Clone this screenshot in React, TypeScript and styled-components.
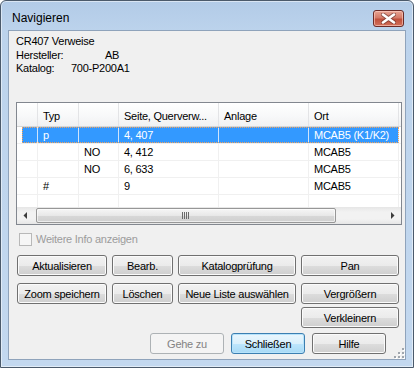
import React from "react";
import styled, { createGlobalStyle } from "styled-components";

const GlobalStyle = createGlobalStyle`
  html, body {
    margin: 0;
    padding: 0;
    background: #ffffff;
  }
  body {
    font-family: "Liberation Sans", Arial, sans-serif;
    font-size: 11px;
    color: #000000;
  }
`;

const COLS = [16, 41, 40, 100, 90, 90];

interface Entry {
  typ: string;
  flag: string;
  seite: string;
  anlage: string;
  ort: string;
  selected?: boolean;
}

const entries: Entry[] = [
  { typ: "p", flag: "", seite: "4, 407", anlage: "", ort: "MCAB5 (K1/K2)", selected: true },
  { typ: "", flag: "NO", seite: "4, 412", anlage: "", ort: "MCAB5" },
  { typ: "", flag: "NO", seite: "6, 633", anlage: "", ort: "MCAB5" },
  { typ: "#", flag: "", seite: "9", anlage: "", ort: "MCAB5" },
];

const CloseGlyph = () => (
  <svg width="15" height="11" viewBox="0 0 15 11">
    <path
      d="M2 1.5 L13 9.5 M13 1.5 L2 9.5"
      stroke="#5a2a26"
      strokeWidth="4.4"
      strokeLinecap="round"
      opacity="0.55"
    />
    <path d="M2 1.5 L13 9.5 M13 1.5 L2 9.5" stroke="#ffffff" strokeWidth="2.6" strokeLinecap="round" />
  </svg>
);

const Arrow = ({ dir }: { dir: "left" | "right" }) => (
  <svg width="5" height="7" viewBox="0 0 5 7">
    {dir === "left" ? (
      <polygon points="4,0 4,7 0.5,3.5" fill="#3c3c3c" />
    ) : (
      <polygon points="1,0 1,7 4.5,3.5" fill="#3c3c3c" />
    )}
  </svg>
);

const Grip = () => (
  <svg width="8" height="7" viewBox="0 0 8 7">
    {[0, 2, 4, 6].map((x) => (
      <rect key={x} x={x} y="0" width="1" height="7" fill="#6b6b6b" />
    ))}
  </svg>
);

const SizeGrip = () => (
  <svg width="12" height="12" viewBox="0 0 12 12">
    {[
      [9, 1],
      [9, 5],
      [5, 5],
      [9, 9],
      [5, 9],
      [1, 9],
    ].map(([x, y]) => (
      <g key={`${x}-${y}`}>
        <rect x={x + 1} y={y + 1} width="2" height="2" fill="#ffffff" />
        <rect x={x} y={y} width="2" height="2" fill="#a0a6ad" />
      </g>
    ))}
  </svg>
);

const App: React.FC = () => {
  return (
    <>
      <GlobalStyle />
      <Window>
        <TitleBar>
          <Title>Navigieren</Title>
          <CloseButton>
            <CloseGlyph />
          </CloseButton>
        </TitleBar>
        <Client>
          <Heading>CR407 Verweise</Heading>
          <InfoRow $h={14}>
            <InfoLabel>Hersteller:</InfoLabel>
            <InfoValue $indent={34}>AB</InfoValue>
          </InfoRow>
          <InfoRow $h={13}>
            <InfoLabel>Katalog:</InfoLabel>
            <InfoValue $indent={0}>700-P200A1</InfoValue>
          </InfoRow>

          <ListView>
            <Header>
              <HeaderCell $w={21} />
              <HeaderCell $w={COLS[1]}>Typ</HeaderCell>
              <HeaderCell $w={COLS[2]} />
              <HeaderCell $w={COLS[3]}>Seite, Querverw...</HeaderCell>
              <HeaderCell $w={COLS[4]}>Anlage</HeaderCell>
              <HeaderCell $w={COLS[5]}>Ort</HeaderCell>
              <HeaderRest />
            </Header>
            {entries.map((e, i) => (
              <Row key={i}>
                <Gutter />
                <RowBody $selected={!!e.selected}>
                  <Cell $w={COLS[0]} $selected={!!e.selected} />
                  <Cell $w={COLS[1]} $selected={!!e.selected}>{e.typ}</Cell>
                  <Cell $w={COLS[2]} $selected={!!e.selected}>{e.flag}</Cell>
                  <Cell $w={COLS[3]} $selected={!!e.selected}>{e.seite}</Cell>
                  <Cell $w={COLS[4]} $selected={!!e.selected}>{e.anlage}</Cell>
                  <Cell $w={COLS[5]} $selected={!!e.selected}>{e.ort}</Cell>
                </RowBody>
              </Row>
            ))}
            <FillerRow>
              <Gutter />
              <RowBody $selected={false}>
                {COLS.map((w, i) => (
                  <Cell key={i} $w={w} $selected={false} />
                ))}
              </RowBody>
            </FillerRow>
            <ScrollBar>
              <ScrollArrow>
                <Arrow dir="left" />
              </ScrollArrow>
              <Track>
                <Thumb>
                  <Grip />
                </Thumb>
              </Track>
              <ScrollArrow>
                <Arrow dir="right" />
              </ScrollArrow>
            </ScrollBar>
          </ListView>

          <CheckRow>
            <CheckBox />
            <CheckLabel>Weitere Info anzeigen</CheckLabel>
          </CheckRow>

          <ButtonRow $mt={9}>
            <Button>Aktualisieren</Button>
            <Button>Bearb.</Button>
            <Button>Katalogprüfung</Button>
            <Button>Pan</Button>
          </ButtonRow>
          <ButtonRow $mt={7}>
            <Button>Zoom speichern</Button>
            <Button>Löschen</Button>
            <Button>Neue Liste auswählen</Button>
            <Button>Vergrößern</Button>
          </ButtonRow>
          <ButtonRow $mt={3}>
            <Button $col={4}>Verkleinern</Button>
          </ButtonRow>

          <DialogButtons>
            <Button $variant="disabled">Gehe zu</Button>
            <Button $variant="default">Schließen</Button>
            <Button>Hilfe</Button>
          </DialogButtons>

          <GripCorner>
            <SizeGrip />
          </GripCorner>
        </Client>
      </Window>
    </>
  );
};

const Window = styled.div`
  width: 414px;
  height: 368px;
  box-sizing: border-box;
  border: 1px solid #4b5a6b;
  border-radius: 6px 6px 0 0;
  background: linear-gradient(180deg, #b2cbe7 0px, #bcd3ec 30px, #c3d8ef 100%);
  box-shadow: inset 0 0 0 1px rgba(255, 255, 255, 0.5);
  display: flex;
  flex-direction: column;
  padding: 0 7px 7px 7px;
`;

const TitleBar = styled.div`
  height: 29px;
  box-sizing: border-box;
  padding-top: 5px;
  display: flex;
  align-items: center;
  justify-content: space-between;
`;

const Title = styled.span`
  font-family: "Liberation Sans", Arial, sans-serif;
  font-size: 12px;
  padding-left: 4px;
  color: #000000;
`;

const CloseButton = styled.div`
  width: 31px;
  height: 17px;
  box-sizing: border-box;
  margin-right: 2px;
  border: 1px solid #6b2b27;
  border-radius: 3px;
  background: linear-gradient(180deg, #e8a493 0%, #d47a68 45%, #c0503c 55%, #d2705a 100%);
  box-shadow: inset 0 0 0 1px rgba(255, 210, 200, 0.6);
  display: flex;
  align-items: center;
  justify-content: center;
`;

const Client = styled.div`
  flex: 1;
  position: relative;
  background: #f0f0f0;
  border: 1px solid #8fa3bb;
  display: flex;
  flex-direction: column;
  padding: 4px 0 0 7px;
  letter-spacing: -0.25px;
`;

const Heading = styled.div`
  height: 13px;
  line-height: 13px;
`;

const InfoRow = styled.div<{ $h: number }>`
  height: ${({ $h }) => $h}px;
  line-height: 13px;
  display: flex;
  align-items: flex-end;
`;

const InfoLabel = styled.span`
  width: 55px;
  flex: none;
  height: 13px;
  white-space: nowrap;
`;

const InfoValue = styled.span<{ $indent: number }>`
  height: 13px;
  margin-left: ${({ $indent }) => $indent}px;
`;

const ListView = styled.div`
  margin-top: 27px;
  width: 386px;
  height: 123px;
  box-sizing: border-box;
  border: 1px solid #82878f;
  background: #ffffff;
  display: flex;
  flex-direction: column;
  overflow: hidden;
`;

const Header = styled.div`
  height: 24px;
  box-sizing: border-box;
  display: flex;
  border-bottom: 1px solid #d5d5d5;
  background: linear-gradient(180deg, #ffffff 0%, #f7f8f9 60%, #f0f1f2 100%);
  flex: none;
`;

const HeaderCell = styled.div<{ $w: number }>`
  width: ${({ $w }) => $w}px;
  flex: none;
  box-sizing: border-box;
  border-right: 1px solid #e3e4e6;
  padding: 2px 0 0 5px;
  display: flex;
  align-items: center;
  white-space: nowrap;
  overflow: hidden;
`;

const HeaderRest = styled.div`
  flex: 1;
`;

const Row = styled.div`
  height: 17px;
  box-sizing: border-box;
  display: flex;
  border-bottom: 1px solid #f0f0f0;
  flex: none;
`;

const FillerRow = styled.div`
  flex: 1;
  display: flex;
`;

const Gutter = styled.div`
  width: 5px;
  flex: none;
`;

const RowBody = styled.div<{ $selected: boolean }>`
  display: flex;
  background: ${({ $selected }) => ($selected ? "#3399ff" : "transparent")};
  outline: ${({ $selected }) => ($selected ? "1px dotted #f2a35e" : "none")};
  outline-offset: -1px;
`;

const Cell = styled.div<{ $w: number; $selected: boolean }>`
  width: ${({ $w }) => $w}px;
  flex: none;
  box-sizing: border-box;
  border-right: 1px solid ${({ $selected }) => ($selected ? "#cfe4fb" : "#f0f0f0")};
  padding-left: 5px;
  line-height: 16px;
  white-space: nowrap;
  overflow: hidden;
  color: ${({ $selected }) => ($selected ? "#ffffff" : "#000000")};
`;

const ScrollBar = styled.div`
  height: 17px;
  flex: none;
  display: flex;
  background: linear-gradient(180deg, #e6e6e6 0%, #f2f2f2 30%, #f2f2f2 70%, #e6e6e6 100%);
`;

const ScrollArrow = styled.div`
  width: 17px;
  flex: none;
  display: flex;
  align-items: center;
  justify-content: center;
`;

const Track = styled.div`
  flex: 1;
  display: flex;
  align-items: center;
  padding-left: 2px;
`;

const Thumb = styled.div`
  width: 300px;
  height: 15px;
  box-sizing: border-box;
  border: 1px solid #979797;
  border-radius: 2px;
  background: linear-gradient(180deg, #f6f6f6 0%, #e8e8e8 50%, #d8d8d8 51%, #cfcfcf 100%);
  box-shadow: inset 0 0 0 1px rgba(255, 255, 255, 0.6);
  display: flex;
  align-items: center;
  justify-content: center;
`;

const CheckRow = styled.div`
  margin-top: 8px;
  height: 13px;
  display: flex;
  align-items: center;
  gap: 4px;
  padding-left: 3px;
`;

const CheckBox = styled.div`
  width: 13px;
  height: 13px;
  box-sizing: border-box;
  border: 1px solid #b8b8b8;
  background: #f6f6f6;
`;

const CheckLabel = styled.span`
  color: #9c9c9c;
  line-height: 13px;
`;

const ButtonRow = styled.div<{ $mt: number }>`
  margin-top: ${({ $mt }) => $mt}px;
  margin-left: 1px;
  display: grid;
  grid-template-columns: 90px 61px 118px 98px;
  column-gap: 5px;
`;

type Variant = "normal" | "disabled" | "default";

const Button = styled.div<{ $variant?: Variant; $col?: number }>`
  ${({ $col }) => ($col ? `grid-column: ${$col};` : "")}
  height: 21px;
  box-sizing: border-box;
  border-radius: 3px;
  display: flex;
  align-items: center;
  justify-content: center;
  white-space: nowrap;
  border: 1px solid
    ${({ $variant }) =>
      $variant === "disabled" ? "#adb2b5" : $variant === "default" ? "#3c7fb1" : "#707070"};
  color: ${({ $variant }) => ($variant === "disabled" ? "#838383" : "#000000")};
  background: ${({ $variant }) =>
    $variant === "disabled"
      ? "#f4f4f4"
      : $variant === "default"
      ? "linear-gradient(180deg, #eaf6fd 0%, #d9f0fc 50%, #bee6fd 51%, #a7d9f5 100%)"
      : "linear-gradient(180deg, #f2f2f2 0%, #ebebeb 50%, #dddddd 51%, #cfcfcf 100%)"};
  box-shadow: ${({ $variant }) =>
    $variant === "disabled"
      ? "none"
      : $variant === "default"
      ? "inset 0 0 0 1px #b7e3fb"
      : "inset 0 0 0 1px #fbfbfb"};
`;

const DialogButtons = styled.div`
  margin-top: 5px;
  padding-right: 19px;
  display: grid;
  grid-template-columns: repeat(3, 74px);
  column-gap: 7px;
  justify-content: end;
`;

const GripCorner = styled.div`
  position: absolute;
  right: 0;
  bottom: 0;
  display: flex;
`;

export default App;
